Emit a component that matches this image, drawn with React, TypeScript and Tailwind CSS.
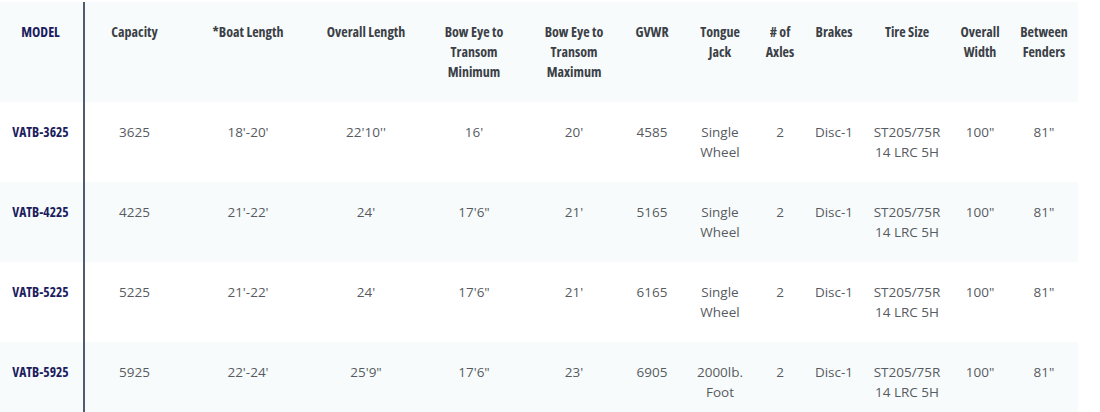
type Row = {
  model: string;
  cells: string[][];
};

const headers: string[][] = [
  ["Capacity"],
  ["*Boat Length"],
  ["Overall Length"],
  ["Bow Eye to", "Transom", "Minimum"],
  ["Bow Eye to", "Transom", "Maximum"],
  ["GVWR"],
  ["Tongue", "Jack"],
  ["# of", "Axles"],
  ["Brakes"],
  ["Tire Size"],
  ["Overall", "Width"],
  ["Between", "Fenders"],
];

const widths = [
  "w-[100px]",
  "w-[128px]",
  "w-[108px]",
  "w-[108px]",
  "w-[92px]",
  "w-[64px]",
  "w-[72px]",
  "w-[48px]",
  "w-[60px]",
  "w-[86px]",
  "w-[60px]",
  "w-[68px]",
];

const tire = ["ST205/75R", "14 LRC 5H"];

const rows: Row[] = [
  {
    model: "VATB-3625",
    cells: [["3625"], ["18'-20'"], ["22'10''"], ["16'"], ["20'"], ["4585"], ["Single", "Wheel"], ["2"], ["Disc-1"], tire, ['100"'], ['81"']],
  },
  {
    model: "VATB-4225",
    cells: [["4225"], ["21'-22'"], ["24'"], ['17\'6"'], ["21'"], ["5165"], ["Single", "Wheel"], ["2"], ["Disc-1"], tire, ['100"'], ['81"']],
  },
  {
    model: "VATB-5225",
    cells: [["5225"], ["21'-22'"], ["24'"], ['17\'6"'], ["21'"], ["6165"], ["Single", "Wheel"], ["2"], ["Disc-1"], tire, ['100"'], ['81"']],
  },
  {
    model: "VATB-5925",
    cells: [["5925"], ["22'-24'"], ['25\'9"'], ['17\'6"'], ["23'"], ["6905"], ["2000lb.", "Foot"], ["2"], ["Disc-1"], tire, ['100"'], ['81"']],
  },
];

// condensed bold used for headings and the model column
const condensed = "font-['Open_Sans',sans-serif] font-bold [font-stretch:75%]";

const Lines = ({ lines }: { lines: string[] }) => (
  <>
    {lines.map((l, i) => (
      <div key={i}>{l}</div>
    ))}
  </>
);

export default function App() {
  return (
    <div className="w-[1100px] h-[412px] overflow-hidden bg-white pt-[2px]">
      <table className="w-[1078px] table-fixed border-collapse font-['Open_Sans',sans-serif]">
        <thead>
          <tr className="bg-[#f7fbfc] h-[100px]">
            <th className={`w-[84px] border-r-2 border-[#4f5b6e] align-top pt-[20px] pr-[2px] text-[14px] leading-[20px] text-[#1c1d5e] ${condensed}`}>
              MODEL
            </th>
            {headers.map((h, i) => (
              <th
                key={i}
                className={`${widths[i]} align-top pt-[20px] text-[14px] leading-[20px] text-[#3b4046] ${condensed}`}
              >
                <Lines lines={h} />
              </th>
            ))}
          </tr>
        </thead>
        <tbody>
          {rows.map((r, ri) => (
            <tr key={r.model} className={`h-[80px] ${ri % 2 === 1 ? "bg-[#f7fbfc]" : "bg-white"}`}>
              <td className={`border-r-2 border-[#4f5b6e] align-top pt-[20px] pr-[2px] text-center text-[13.5px] leading-[20px] text-[#1c1d5e] ${condensed}`}>
                {r.model}
              </td>
              {r.cells.map((c, ci) => (
                <td key={ci} className="align-top pt-[20px] text-center text-[13.5px] font-normal leading-[20px] text-[#575b5f]">
                  <Lines lines={c} />
                </td>
              ))}
            </tr>
          ))}
        </tbody>
      </table>
    </div>
  );
}
